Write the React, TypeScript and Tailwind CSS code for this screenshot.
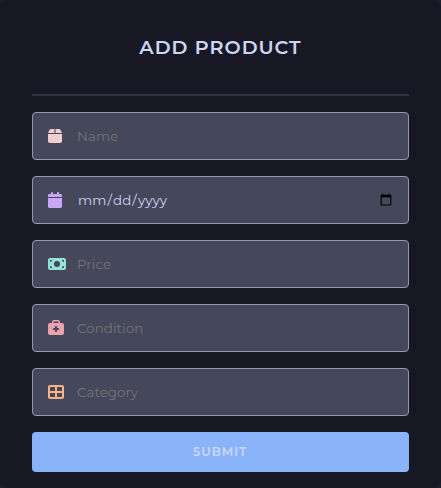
import type { ReactNode } from "react";
import {
  FaBox,
  FaBriefcaseMedical,
  FaCalendar,
  FaMoneyBill,
  FaTableCellsLarge,
} from "react-icons/fa6";

interface FieldProps {
  icon: ReactNode;
  children: ReactNode;
}

function Field({ icon, children }: FieldProps) {
  return (
    <label className="flex h-12 items-center rounded-[4px] border border-[#9399b2] bg-[#45475a] pl-[15px] pr-[13px]">
      <span className="w-[29px] shrink-0">{icon}</span>
      {children}
    </label>
  );
}

const inputClass =
  "min-w-0 flex-1 bg-transparent pt-px text-[13.333px] tracking-[0.1px] text-[#cdd6f4] outline-none placeholder:text-[#757575]";

export default function App() {
  return (
    <div className="h-[488px] w-[441px] bg-[#1e1e2e] font-['Montserrat','Inter',sans-serif]">
      <form className="flex h-full flex-col rounded-lg bg-[#181825] px-8 pb-4">
        <h1 className="flex h-24 items-center justify-center border-b-2 border-[#313244] text-[19.2px] font-semibold tracking-[1px] text-[#cdd6f4]">
          ADD PRODUCT
        </h1>
        <div className="mt-4 flex flex-col gap-4">
          <Field icon={<FaBox className="h-4 w-3.5 text-[#f2cdcd]" />}>
            <input type="text" placeholder="Name" className={inputClass} />
          </Field>
          <Field icon={<FaCalendar className="h-4 w-3.5 text-[#cba6f7]" />}>
            <input
              type="date"
              className={`${inputClass} [&::-webkit-calendar-picker-indicator]:mb-px [&::-webkit-calendar-picker-indicator]:size-3.5`}
            />
          </Field>
          <Field icon={<FaMoneyBill className="h-4 w-[18px] text-[#94e2d5]" />}>
            <input type="text" placeholder="Price" className={inputClass} />
          </Field>
          <Field icon={<FaBriefcaseMedical className="size-4 text-[#eba0ac]" />}>
            <input type="text" placeholder="Condition" className={inputClass} />
          </Field>
          <Field icon={<FaTableCellsLarge className="size-4 text-[#fab387]" />}>
            <input type="text" placeholder="Category" className={inputClass} />
          </Field>
          <button
            type="button"
            className="h-10 rounded-[4px] bg-[#89b4fa] pr-px text-[12px] font-semibold tracking-[1px] text-[#cdd6f4]"
          >
            SUBMIT
          </button>
        </div>
      </form>
    </div>
  );
}
